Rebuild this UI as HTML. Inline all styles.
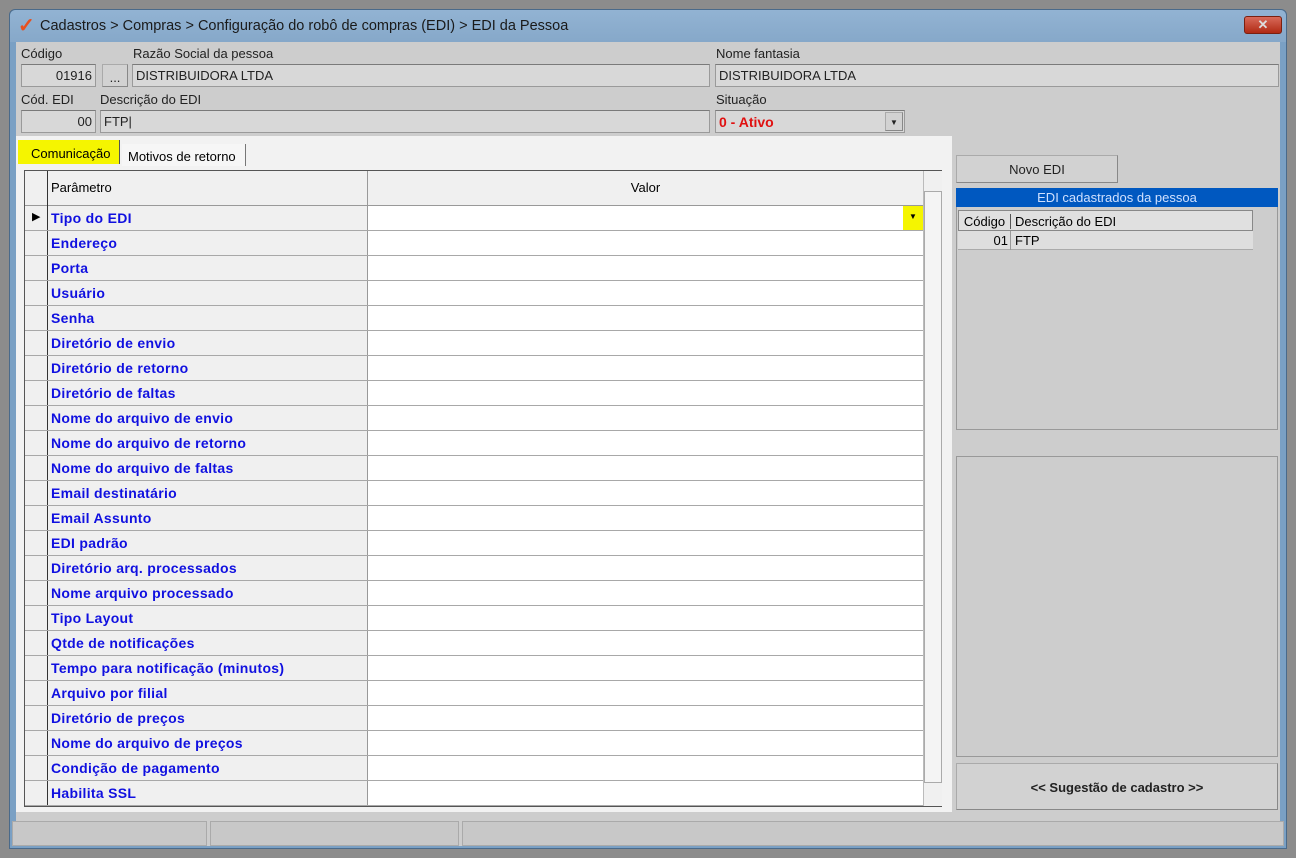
<!DOCTYPE html>
<html><head><meta charset="utf-8"><style>
*{box-sizing:border-box;margin:0;padding:0}
body{width:1296px;height:858px;background:#8c8c8c;font-family:"Liberation Sans",sans-serif;font-size:13px;position:relative;overflow:hidden}
.a{position:absolute}
.win{left:9px;top:9px;width:1278px;height:840px;background:#7aa0c4;border:1px solid #4a6a8a;border-radius:6px 6px 0 0}
.title{left:10px;top:10px;width:1276px;height:32px;background:linear-gradient(#92b3d3,#86a8c9);color:#1a1a1a;font-size:14.5px;border-radius:6px 6px 0 0}
.client{left:16px;top:42px;width:1264px;height:804px;background:#cdcdcd}
.lbl{font-size:13px;color:#222}
.inp{background:#d8d8d8;border:1px solid #9a9a9a;border-top-color:#7a7a7a;height:23px;font-size:13px;padding:3px 3px;color:#222}
.grid{left:24px;top:170px;width:918px;height:637px;border:1px solid #555;background:#fff}
.row{position:absolute;left:0;height:25px;width:898px;border-bottom:1px solid #a8a8a8}
.ind{position:absolute;left:0;top:0;width:23px;height:24px;background:#f0f0f0;border-right:1px solid #333}
.par{position:absolute;left:23px;top:0;width:320px;height:24px;background:#f0f0f0;border-right:1px solid #999;color:#1010e0;font-weight:bold;font-size:14px;padding:4px 3px;letter-spacing:0.3px}
.btn{background:#d2d2d2;border:1px solid #aaa;border-right-color:#888;border-bottom-color:#888;text-align:center;color:#222}
</style></head><body>
<div class="a win"></div>
<div class="a title"><span class="a" style="left:8px;top:3px;color:#e8501e;font-size:20px;font-weight:bold">✓</span><span class="a" style="left:30px;top:8px">Cadastros &gt; Compras &gt; Configuração do robô de compras (EDI) &gt; EDI da Pessoa</span>
<div class="a" style="left:1234px;top:6px;width:38px;height:18px;background:linear-gradient(#d86a5a,#b02a14);border:1px solid #7a2010;border-radius:3px;color:#ddd;text-align:center;font-weight:bold;font-size:13px;line-height:16px">✕</div></div>
<div class="a client"></div>
<span class="a lbl" style="left:21px;top:46px">Código</span>
<span class="a lbl" style="left:133px;top:46px">Razão Social da pessoa</span>
<span class="a lbl" style="left:716px;top:46px">Nome fantasia</span>
<div class="a inp" style="left:21px;top:64px;width:75px;text-align:right">01916</div>
<div class="a btn" style="left:102px;top:64px;width:26px;height:23px;line-height:26px">...</div>
<div class="a inp" style="left:132px;top:64px;width:578px">DISTRIBUIDORA LTDA</div>
<div class="a inp" style="left:715px;top:64px;width:564px">DISTRIBUIDORA LTDA</div>
<span class="a lbl" style="left:21px;top:92px">Cód. EDI</span>
<span class="a lbl" style="left:100px;top:92px">Descrição do EDI</span>
<span class="a lbl" style="left:716px;top:92px">Situação</span>
<div class="a inp" style="left:21px;top:110px;width:75px;text-align:right">00</div>
<div class="a inp" style="left:100px;top:110px;width:610px">FTP|</div>
<div class="a inp" style="left:715px;top:110px;width:190px;color:#e01010;font-weight:bold;font-size:14px">0 - Ativo</div>
<div class="a btn" style="left:885px;top:112px;width:18px;height:19px;font-size:8px;line-height:19px">▼</div>
<div class="a" style="left:16px;top:136px;width:936px;height:676px;background:#f2f2f2"></div>
<div class="a" style="left:18px;top:140px;width:102px;height:24px;background:#f5f500;border-right:1px solid #555;padding:6px 0 0 13px;font-size:13px">Comunicação</div>
<div class="a" style="left:122px;top:144px;width:124px;height:22px;background:#f6f6f6;border-right:1px solid #777;padding:5px 0 0 6px;font-size:13px">Motivos de retorno</div>
<div class="a grid">
<div class="a" style="left:0;top:0;width:898px;height:35px;background:#f0f0f0;border-bottom:1px solid #999"><div class="a" style="left:0;top:0;width:23px;height:35px;border-right:1px solid #333"></div><div class="a" style="left:23px;top:0;width:320px;height:35px;border-right:1px solid #999;padding:9px 3px">Parâmetro</div><div class="a" style="left:343px;width:555px;top:9px;text-align:center">Valor</div></div>
<div class="a" style="left:898px;top:0;width:19px;height:635px;background:#f0f0f0;border-left:1px solid #bbb"><div class="a" style="left:0;top:20px;width:18px;height:592px;border:1px solid #aaa;background:#f4f4f4"></div></div>
<div id="rows"></div>
<div class="a" style="left:878px;top:35px;width:20px;height:24px;background:#f5f500;font-size:8px;text-align:center;line-height:22px">▼</div>
<span class="a" style="left:7px;top:39px;font-size:11px">▶</span>
</div>
<script>
var n=["Tipo do EDI","Endereço","Porta","Usuário","Senha","Diretório de envio","Diretório de retorno","Diretório de faltas","Nome do arquivo de envio","Nome do arquivo de retorno","Nome do arquivo de faltas","Email destinatário","Email Assunto","EDI padrão","Diretório arq. processados","Nome arquivo processado","Tipo Layout","Qtde de notificações","Tempo para notificação (minutos)","Arquivo por filial","Diretório de preços","Nome do arquivo de preços","Condição de pagamento","Habilita SSL"];
var h="";n.forEach(function(t,i){h+='<div class="row" style="top:'+(35+i*25)+'px"><div class="ind"></div><div class="par">'+t+'</div></div>'});
document.getElementById("rows").innerHTML=h;
</script>
<div class="a btn" style="left:956px;top:155px;width:162px;height:28px;line-height:28px">Novo EDI</div>
<div class="a" style="left:956px;top:188px;width:322px;height:242px;border:1px solid #999;background:#cdcdcd"></div>
<div class="a" style="left:956px;top:188px;width:322px;height:19px;background:#0058c0;color:#cfe0ff;text-align:center;line-height:19px">EDI cadastrados da pessoa</div>
<div class="a" style="left:958px;top:210px;width:295px;height:21px;background:#e0e0e0;border:1px solid #888"><span class="a" style="left:0;top:3px;width:52px;text-align:center;border-right:1px solid #555">Código</span><span class="a" style="left:56px;top:3px">Descrição do EDI</span></div>
<div class="a" style="left:958px;top:231px;width:295px;height:19px;background:#dedede;border-bottom:1px solid #aaa"><span class="a" style="left:0;top:2px;width:50px;text-align:right">01</span><span class="a" style="left:52px;top:0;height:19px;border-left:1px solid #999;padding:2px 4px">FTP</span></div>
<div class="a" style="left:956px;top:456px;width:322px;height:301px;border:1px solid #999;background:#cdcdcd"></div>
<div class="a btn" style="left:956px;top:763px;width:322px;height:47px;line-height:47px;font-weight:bold">&lt;&lt; Sugestão de cadastro &gt;&gt;</div>
<div class="a" style="left:12px;top:821px;width:195px;height:25px;border:1px solid #aaa;background:#c8c8c8"></div>
<div class="a" style="left:210px;top:821px;width:249px;height:25px;border:1px solid #aaa;background:#c8c8c8"></div>
<div class="a" style="left:462px;top:821px;width:822px;height:25px;border:1px solid #aaa;background:#c8c8c8"></div>
</body></html>
